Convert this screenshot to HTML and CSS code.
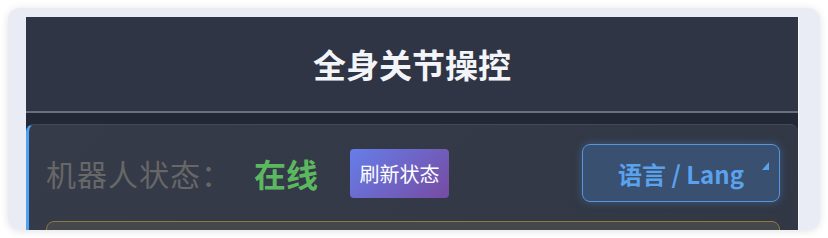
FILE: index.html
```html
<!DOCTYPE html>
<html lang="zh-CN">
<head>
    <meta charset="UTF-8">
    <meta name="viewport" content="width=device-width, initial-scale=1.0">
    <title>全身关节操控</title>
    <link rel="stylesheet" href="styles.css">
</head>
<body>
    <div class="frame">
        <div class="panel">
            <div class="header">
                <h1>全身关节操控</h1>
            </div>
            <div class="card">
                <div class="statusRow">
                    <span class="statusLabel">机器人状态：</span>
                    <span class="statusValue">在线</span>
                    <button class="refreshBtn">刷新状态</button>
                    <button class="langBtn">语言 / Lang<span class="langArrow"></span></button>
                </div>
                <div class="noticeBox"></div>
            </div>
        </div>
    </div>
</body>
</html>
```

FILE: styles.css
```css
body {
    margin: 0;
    padding: 8px;
    background-color: #ffffff;
    font-family: "Noto Sans CJK SC", "Noto Sans", sans-serif;
}
.frame {
    width: 812px;
    height: 222px;
    box-sizing: border-box;
    padding: 9px 21px 0 18px;
    background-color: #e9ecf4;
    border-radius: 12px;
    box-shadow: 0 1px 8px rgba(0, 0, 0, 0.12);
    overflow: hidden;
}
.panel {
    height: 100%;
    background-color: #222835;
    border-right: 1px solid #f7f8fb;
}
.header {
    height: 94px;
    display: flex;
    justify-content: center;
    align-items: center;
    background-color: #2f3545;
    border-bottom: 2px solid #687080;
}
h1 {
    margin: 0;
    color: #f2f4f7;
    font-size: 33px;
    font-weight: bold;
}
.card {
    margin-top: 11px;
    height: 200px;
    padding: 19px 18px 0 17px;
    background: linear-gradient(135deg, #353b48, #313744);
    border-left: 3px solid #4ea1f5;
    border-top: 1px solid #434a57;
    border-radius: 8px 8px 0 0;
}
.statusRow {
    display: flex;
    align-items: center;
    height: 58px;
}
.statusLabel {
    color: #676767;
    font-size: 30px;
    letter-spacing: 1px;
}
.statusValue {
    margin-left: 22px;
    color: #5cb860;
    font-size: 32px;
    font-weight: bold;
}
.refreshBtn {
    margin-left: 32px;
    width: 99px;
    height: 49px;
    padding: 0;
    border: none;
    border-radius: 4px;
    background: linear-gradient(135deg, #667eea, #764ba2);
    color: #ffffff;
    font-family: inherit;
    font-size: 20px;
    cursor: pointer;
}
.langBtn {
    position: relative;
    margin-left: auto;
    width: 198px;
    height: 58px;
    padding: 0;
    border: 1px solid #5596de;
    border-radius: 8px;
    background-color: rgba(74, 144, 226, 0.28);
    box-shadow: 0 0 10px rgba(74, 144, 226, 0.4);
    color: #5aa2ee;
    font-family: inherit;
    font-size: 24px;
    font-weight: bold;
    cursor: pointer;
}
.langArrow {
    position: absolute;
    top: 17px;
    right: 10px;
    width: 0;
    height: 0;
    border-left: 7px solid transparent;
    border-bottom: 8px solid #5aa2ee;
}
.noticeBox {
    margin-top: 19px;
    height: 60px;
    background-color: #45474a;
    border: 1px solid #8b7b3e;
    border-radius: 8px;
}
```
